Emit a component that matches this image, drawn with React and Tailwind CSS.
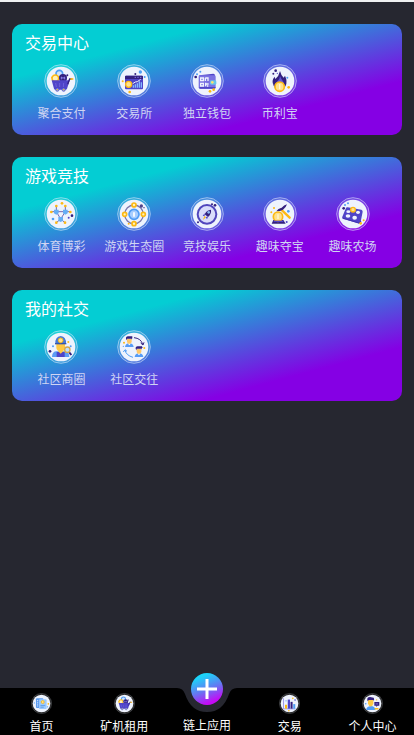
import React from "react";

const P = "#4f44c8";
const D = "#33207f";
const Y = "#fdb913";
const B = "#4f9df5";
const L = "#eef3fd";

function Dots({ items }) {
  return items.map(([x, y, r, c]) => <circle key={x + "-" + y} cx={x} cy={y} r={r} fill={c} />);
}

function Cart() {
  return (
    <>
      <circle cx="46" cy="29" r="10" fill="#cfe3fd" stroke={B} strokeWidth="5" />
      <circle cx="34" cy="43" r="10" fill="#fff0b8" stroke={Y} strokeWidth="5" />
      <circle cx="57" cy="42" r="12" fill={D} />
      <path d="M52 46v-7l5 4 5-4v7" fill="none" stroke="#8f86ee" strokeWidth="3" />
      <path d="M23 49H77L69 74Q68 77 64 77H35Q31 77 30 74Z" fill={P} />
      <path d="M71 61 77 45H83" fill="none" stroke={D} strokeWidth="4" />
      <path d="M79 45H88" stroke={Y} strokeWidth="5" />
      <path d="M35 57 37 69M47 57V69M59 57 58 69" stroke="#6b62dc" strokeWidth="3" />
      <circle cx="40" cy="77" r="5" fill="#8ba8dd" stroke={P} strokeWidth="2" />
      <circle cx="59" cy="77" r="5" fill="#8ba8dd" stroke={P} strokeWidth="2" />
      <Dots items={[[70, 34, 3, D], [23, 40, 2, Y], [40, 77, 2, Y], [59, 77, 2, Y]]} />
    </>
  );
}

function Exchange() {
  return (
    <>
      <rect x="24" y="35" width="54" height="41" rx="3" fill={P} />
      <path d="M24 38q0-3 3-3h48q3 0 3 3v7H24z" fill={D} />
      <path d="M53 40h4M61 40h4M69 40h4" stroke="#8279e8" strokeWidth="3" />
      <circle cx="35" cy="61" r="9" fill="#ffe28a" stroke={Y} strokeWidth="4" />
      <path d="M49 71v-7M55 71V61M61 71V58M67 71V52M73 71V55" stroke="#83b9ff" strokeWidth="4" />
      <path d="M47 59 55 54 61 53 71 46" fill="none" stroke={L} strokeWidth="3" />
      <Dots items={[[70, 24, 5, B], [55, 30, 3, D], [83, 39, 3, B], [17, 52, 3, Y], [38, 84, 4, Y]]} />
    </>
  );
}

function Wallet() {
  return (
    <>
      <path d="M28 34 70 29Q75 29 75 35V40H28Z" fill={P} />
      <rect x="26" y="34" width="51" height="40" rx="4" fill="#7a72e2" />
      <path d="M27 71Q28 74 31 74H73Q77 74 77 69H30Z" fill={P} />
      <g fill="none" stroke={L} strokeWidth="4">
        <path d="M32 42h8v8h-8zM32 58h8v8h-8zM46 41v10M46 42h8v9M47 56v11M47 60h9M53 64v4" />
      </g>
      <rect x="60" y="49" width="19" height="13" rx="4" fill="#66c4ec" />
      <circle cx="67" cy="55" r="4" fill="#ffe06c" />
      <Dots items={[[31, 23, 3, B], [21, 31, 3, B], [17, 39, 4, D], [60, 82, 4, Y], [71, 77, 4, Y]]} />
    </>
  );
}

function Flame() {
  return (
    <>
      <path d="M51 21Q54 34 62 41L66 35Q74 52 68 65 63 75 51 77 37 77 32 65 24 50 35 38L37 45Q48 36 51 21Z" fill={D} />
      <path d="M51 36Q55 46 61 53 66 65 55 75L39 71Q34 60 43 52 51 45 51 36Z" fill="#5f55d5" />
      <path d="M30 52Q31 68 44 76 31 73 30 52Z" fill="#8e84eb" />
      <circle cx="50" cy="68" r="14" fill="#ffe28a" stroke={Y} strokeWidth="5" />
      <path d="M48 60h4v16h-4z" fill="#fff7d8" />
      <Dots items={[[38, 20, 4, D], [31, 29, 3, D], [43, 28, 2, P], [73, 41, 3, B], [77, 70, 4, Y]]} />
    </>
  );
}

function Network() {
  return (
    <>
      <g fill="none" stroke="#7468b4" strokeWidth="3">
        <path d="M37 44H64L50 66ZM37 44V27M37 44H22M64 44V27M64 44H79M50 66 37 77M50 66 63 77" />
      </g>
      <path d="M30 38h14v11l-7 4-7-4zM57 38h14v11l-7 4-7-4zM43 60h14v11l-7 4-7-4z" fill="#65aef5" />
      <Dots items={[[37, 27, 4, Y], [64, 27, 4, Y], [22, 45, 4, Y], [79, 45, 4, Y], [37, 77, 4, Y], [63, 77, 4, Y], [54, 19, 4, Y], [84, 56, 4, D], [74, 62, 3, P], [27, 66, 4, B]]} />
    </>
  );
}

function Orbit() {
  return (
    <>
      <circle cx="51" cy="52" r="28" fill="none" stroke="#7c77ad" strokeWidth="4" />
      <circle cx="51" cy="52" r="15" fill="#a8ceff" stroke={B} strokeWidth="5" />
      <path d="M48 46h6v13h-6z" fill="#f2f8ff" />
      <g fill="#fff3be" stroke={Y} strokeWidth="5">
        <circle cx="51" cy="24" r="6" />
        <circle cx="51" cy="80" r="6" />
        <circle cx="23" cy="52" r="6" />
        <circle cx="79" cy="52" r="6" />
      </g>
      <Dots items={[[73, 27, 5, "#51458b"], [81, 32, 2, D], [35, 80, 3, Y]]} />
    </>
  );
}

function Rocket() {
  return (
    <>
      <circle cx="51" cy="52" r="28" fill="#d9dcfb" stroke="#5146bd" strokeWidth="6" />
      <path d="M63 38Q65 50 54 60L44 52Q50 39 63 38Z" fill={D} />
      <path d="M44 49 38 56 44 58ZM54 59 51 67 47 60Z" fill={P} />
      <circle cx="56" cy="46" r="4" fill="#88b7f3" />
      <path d="M43 57 48 61 39 69Z" fill={Y} />
      <Dots items={[[66, 22, 3, D], [75, 25, 4, D], [24, 76, 3, D]]} />
    </>
  );
}

function Pickaxe() {
  return (
    <>
      <path d="M54 37 80 62" stroke={Y} strokeWidth="7" strokeLinecap="round" />
      <path d="M40 43Q45 34 56 32 63 24 72 22 70 30 60 38 51 43 40 43Z" fill={D} />
      <path d="M26 80 31 69H61L68 80Z" fill={D} />
      <circle cx="45" cy="59" r="14" fill="#ffe28a" stroke={Y} strokeWidth="5" />
      <path d="M43 52h4v14h-4z" fill="#fff7d8" />
      <path d="M32 73H61" stroke={P} strokeWidth="4" />
      <Dots items={[[33, 33, 3, Y], [25, 46, 3, Y], [76, 43, 4, B], [71, 75, 3, P]]} />
    </>
  );
}

function Farm() {
  return (
    <>
      <path d="M35 31 76 38Q80 39 80 44L74 74Q73 80 67 79L22 66Q17 64 19 59L29 35Q31 30 35 31Z" fill={P} />
      <path d="M20 63 68 78Q73 78 75 72" fill="none" stroke="#4034b0" strokeWidth="3" />
      <g fill={L}>
        <ellipse cx="37" cy="44" rx="6" ry="4" />
        <ellipse cx="66" cy="46" rx="6" ry="5" />
        <ellipse cx="36" cy="57" rx="7" ry="5" />
        <ellipse cx="56" cy="62" rx="7" ry="6" />
      </g>
      <circle cx="51" cy="38" r="7" fill="#ffe28a" stroke={Y} strokeWidth="4" />
      <Dots items={[[27, 24, 3, B], [36, 19, 3, B], [23, 34, 4, D], [74, 79, 4, Y], [83, 70, 3, Y]]} />
    </>
  );
}

function Worker() {
  return (
    <>
      <path d="M24 81Q24 66 36 64H63Q76 66 76 81Z" fill="#5c9cf5" />
      <path d="M38 81V66H62V81Z" fill={P} />
      <path d="M37 38H63V54Q61 64 50 65 39 64 37 54Z" fill="#ffc944" />
      <path d="M34 41Q33 20 50 18 67 20 66 41Z" fill="#4678d8" />
      <path d="M33 39H67V43H33Z" fill="#3555ac" />
      <circle cx="50" cy="31" r="7" fill="#ffe28a" stroke={Y} strokeWidth="3" />
      <path d="M41 62 50 71 59 62" fill="#ffc944" />
      <path d="M75 66 82 75" stroke={D} strokeWidth="6" />
      <circle cx="70" cy="59" r="8" fill="#bfe1ff" stroke="#d5a84d" strokeWidth="4" />
      <Dots items={[[18, 64, 4, D], [27, 49, 3, B], [73, 36, 3, Y], [80, 49, 3, B]]} />
    </>
  );
}

function Person({ x, y }) {
  return (
    <g transform={`translate(${x} ${y})`}>
      <path d="M-13 19Q-12 9 0 8 12 9 13 19Z" fill="#579cf6" />
      <path d="M-7-6H7V4Q4 11 0 11-4 11-7 4Z" fill="#ffc766" />
      <path d="M-10-5Q-11-13-4-13H9Q10-8 7-3V-6H-7V-1Z" fill={D} />
      <path d="M-4 9 0 14 4 9" fill="#fff" />
    </g>
  );
}

function Exchanging() {
  return (
    <>
      <Person x={37} y={32} />
      <Person x={66} y={62} />
      <path d="M51 23Q72 25 77 43M71 39 78 45 81 37" fill="none" stroke={D} strokeWidth="3" />
      <path d="M24 60Q27 76 48 82M19 66 24 59 30 64" fill="none" stroke={B} strokeWidth="3" />
      <Dots items={[[21, 38, 3, Y], [82, 54, 3, Y], [75, 52, 2, D], [19, 49, 2, B]]} />
    </>
  );
}

function Documents() {
  return (
    <>
      <rect x="24" y="25" width="36" height="48" rx="5" fill="#589af0" />
      <rect x="39" y="30" width="37" height="48" rx="4" fill="#9bcaff" />
      <path d="M29 36h6M29 45h6M29 54h6M29 63h6" stroke={L} strokeWidth="4" />
      <circle cx="57" cy="44" r="7" fill="#ffe28a" stroke={Y} strokeWidth="4" />
      <path d="M46 61h23M46 69h16" stroke="#5998e5" strokeWidth="4" />
      <Dots items={[[16, 48, 3, B], [84, 53, 4, Y], [80, 67, 3, B]]} />
    </>
  );
}

function Chart() {
  return (
    <>
      <path d="M22 26V77H80" fill="none" stroke="#8b84e5" strokeWidth="4" />
      <path d="M34 76V57" stroke={Y} strokeWidth="10" />
      <path d="M48 76V32" stroke={P} strokeWidth="11" />
      <path d="M61 76V43" stroke={D} strokeWidth="10" />
      <path d="M74 76V54" stroke={B} strokeWidth="10" />
      <Dots items={[[67, 26, 4, Y], [78, 34, 4, P], [34, 38, 3, B], [48, 86, 4, Y]]} />
    </>
  );
}

function Profile() {
  return (
    <>
      <path d="M20 82Q22 65 42 63 63 64 66 82Z" fill={B} />
      <path d="M29 32H55V51Q52 64 42 65 32 64 29 51Z" fill="#ffc944" />
      <path d="M27 40Q21 20 39 20L57 23Q62 31 55 40V34H33Z" fill={D} />
      <path d="M60 44H84V62H75L70 69V62H60Z" fill={D} />
      <path d="M66 53h12" stroke="#8f86ee" strokeWidth="4" />
      <path d="M61 73H80V80H61Z" fill={Y} />
      <Dots items={[[18, 52, 4, B], [71, 33, 3, Y]]} />
    </>
  );
}

function Badge({ art: Art, className, dim }) {
  return (
    <svg viewBox="0 0 102 102" className={className} aria-hidden="true">
      <circle cx="51" cy="51" r="49" fill="#fff" fillOpacity={dim ? 0.14 : 0.1} stroke="#e4efff" strokeOpacity={dim ? 0.3 : 0.55} strokeWidth="3" />
      <circle cx="51" cy="51" r="43" fill={L} />
      <Art />
    </svg>
  );
}

const sections = [
  {
    title: "交易中心",
    items: [["聚合支付", Cart], ["交易所", Exchange], ["独立钱包", Wallet], ["币利宝", Flame]],
  },
  {
    title: "游戏竞技",
    items: [["体育博彩", Network], ["游戏生态圈", Orbit], ["竞技娱乐", Rocket], ["趣味夺宝", Pickaxe], ["趣味农场", Farm]],
  },
  {
    title: "我的社交",
    items: [["社区商圈", Worker], ["社区交往", Exchanging]],
  },
];

function Section({ title, items }) {
  return (
    <section className="rounded-[10px] bg-[linear-gradient(165deg,#04cdd3_25%,#8500e4_75%)] px-[13px] pt-[6px] pb-[13px]">
      <h2 className="text-base leading-6 text-white">{title}</h2>
      <div className="mt-[10px] grid grid-cols-5">
        {items.map(([label, art]) => (
          <a key={label} href="#" className="flex flex-col items-center gap-[5px] whitespace-nowrap text-xs leading-[19px] text-[#d0d5f3]">
            <Badge art={art} className="size-[34px]" />
            {label}
          </a>
        ))}
      </div>
    </section>
  );
}

function NavItem({ label, art }) {
  return (
    <a href="#" className="flex flex-col items-center gap-[3px] pt-[5px]">
      <Badge art={art} className="size-[21px]" dim />
      {label}
    </a>
  );
}

export default function App() {
  return (
    <div className="flex min-h-screen flex-col border-t-2 border-[#eff1f2] bg-[#262730] font-['Noto_Sans_CJK_SC','Noto_Sans',sans-serif]">
      <main className="flex flex-1 flex-col gap-[22px] px-3 pt-[22px] pb-6">
        {sections.map((s) => (
          <Section key={s.title} title={s.title} items={s.items} />
        ))}
      </main>
      <nav className="sticky bottom-0 grid h-[47px] grid-cols-5 bg-black text-xs leading-[17px] whitespace-nowrap text-white">
        <NavItem label="首页" art={Documents} />
        <NavItem label="矿机租用" art={Cart} />
        <a href="#" className="relative flex flex-col items-center justify-end pb-[2px]">
          <svg viewBox="0 0 60 46" className="absolute -top-[22px] left-1/2 h-[46px] w-[60px] -translate-x-1/2" aria-hidden="true">
            <defs>
              <linearGradient id="plus" x1="0.3" y1="0" x2="0.7" y2="1">
                <stop offset="0.1" stopColor="#1bd5fa" />
                <stop offset="0.5" stopColor="#627bf2" />
                <stop offset="0.9" stopColor="#c50af5" />
              </linearGradient>
            </defs>
            <path d="M0 22Q6 22 8 28 14 46 30 46 46 46 52 28 54 22 60 22Z" fill="#262730" />
            <circle cx="30" cy="23" r="16" fill="url(#plus)" />
            <path d="M30 13V33M20 23H40" stroke="#fff" strokeWidth="3" />
          </svg>
          链上应用
        </a>
        <NavItem label="交易" art={Chart} />
        <NavItem label="个人中心" art={Profile} />
      </nav>
    </div>
  );
}
